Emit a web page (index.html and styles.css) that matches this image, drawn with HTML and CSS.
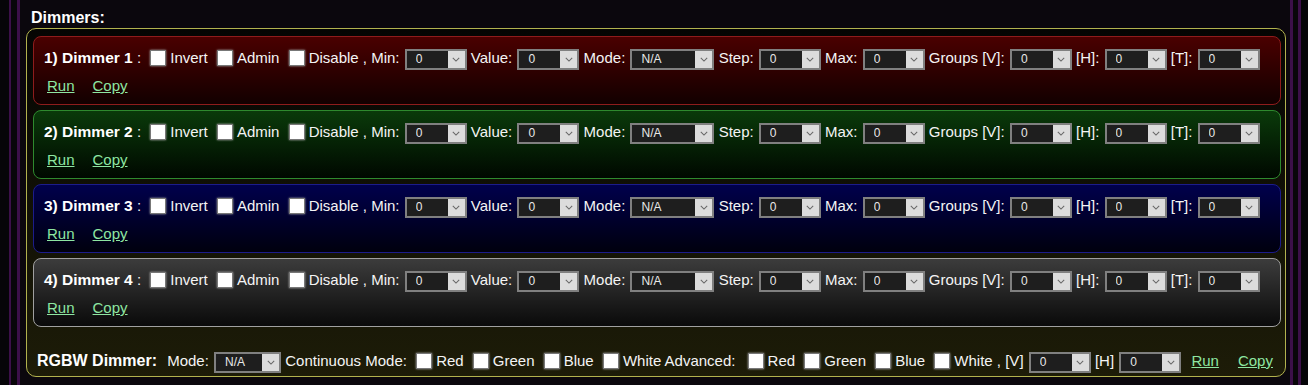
FILE: index.html
```html
<!DOCTYPE html>
<html lang="en">
<head>
  <meta charset="UTF-8">
  <title>Dimmers</title>
  <link rel="stylesheet" href="styles.css">
</head>
<body>

  <div class="outer">
    <div class="inner">

      <div class="title">Dimmers:</div>

      <div class="box">

        <div class="dim red">
          <div class="row">
            <b>1) Dimmer 1</b> : <input type="checkbox">Invert <input type="checkbox">Admin <input type="checkbox">Disable , Min:
            <span class="sel"><select><option>0</option></select><i class="arr"><svg viewBox="0 0 10 6"><path d="M1 1l4 4 4-4"/></svg></i></span> Value:
            <span class="sel"><select><option>0</option></select><i class="arr"><svg viewBox="0 0 10 6"><path d="M1 1l4 4 4-4"/></svg></i></span> Mode:
            <span class="sel wide"><select><option>N/A</option></select><i class="arr"><svg viewBox="0 0 10 6"><path d="M1 1l4 4 4-4"/></svg></i></span> Step:
            <span class="sel"><select><option>0</option></select><i class="arr"><svg viewBox="0 0 10 6"><path d="M1 1l4 4 4-4"/></svg></i></span> Max:
            <span class="sel"><select><option>0</option></select><i class="arr"><svg viewBox="0 0 10 6"><path d="M1 1l4 4 4-4"/></svg></i></span> Groups [V]:
            <span class="sel"><select><option>0</option></select><i class="arr"><svg viewBox="0 0 10 6"><path d="M1 1l4 4 4-4"/></svg></i></span> [H]:
            <span class="sel"><select><option>0</option></select><i class="arr"><svg viewBox="0 0 10 6"><path d="M1 1l4 4 4-4"/></svg></i></span> [T]:
            <span class="sel"><select><option>0</option></select><i class="arr"><svg viewBox="0 0 10 6"><path d="M1 1l4 4 4-4"/></svg></i></span>
          </div>
          <div class="links"><a href="#">Run</a><a href="#">Copy</a></div>
        </div>

        <div class="dim green">
          <div class="row">
            <b>2) Dimmer 2</b> : <input type="checkbox">Invert <input type="checkbox">Admin <input type="checkbox">Disable , Min:
            <span class="sel"><select><option>0</option></select><i class="arr"><svg viewBox="0 0 10 6"><path d="M1 1l4 4 4-4"/></svg></i></span> Value:
            <span class="sel"><select><option>0</option></select><i class="arr"><svg viewBox="0 0 10 6"><path d="M1 1l4 4 4-4"/></svg></i></span> Mode:
            <span class="sel wide"><select><option>N/A</option></select><i class="arr"><svg viewBox="0 0 10 6"><path d="M1 1l4 4 4-4"/></svg></i></span> Step:
            <span class="sel"><select><option>0</option></select><i class="arr"><svg viewBox="0 0 10 6"><path d="M1 1l4 4 4-4"/></svg></i></span> Max:
            <span class="sel"><select><option>0</option></select><i class="arr"><svg viewBox="0 0 10 6"><path d="M1 1l4 4 4-4"/></svg></i></span> Groups [V]:
            <span class="sel"><select><option>0</option></select><i class="arr"><svg viewBox="0 0 10 6"><path d="M1 1l4 4 4-4"/></svg></i></span> [H]:
            <span class="sel"><select><option>0</option></select><i class="arr"><svg viewBox="0 0 10 6"><path d="M1 1l4 4 4-4"/></svg></i></span> [T]:
            <span class="sel"><select><option>0</option></select><i class="arr"><svg viewBox="0 0 10 6"><path d="M1 1l4 4 4-4"/></svg></i></span>
          </div>
          <div class="links"><a href="#">Run</a><a href="#">Copy</a></div>
        </div>

        <div class="dim blue">
          <div class="row">
            <b>3) Dimmer 3</b> : <input type="checkbox">Invert <input type="checkbox">Admin <input type="checkbox">Disable , Min:
            <span class="sel"><select><option>0</option></select><i class="arr"><svg viewBox="0 0 10 6"><path d="M1 1l4 4 4-4"/></svg></i></span> Value:
            <span class="sel"><select><option>0</option></select><i class="arr"><svg viewBox="0 0 10 6"><path d="M1 1l4 4 4-4"/></svg></i></span> Mode:
            <span class="sel wide"><select><option>N/A</option></select><i class="arr"><svg viewBox="0 0 10 6"><path d="M1 1l4 4 4-4"/></svg></i></span> Step:
            <span class="sel"><select><option>0</option></select><i class="arr"><svg viewBox="0 0 10 6"><path d="M1 1l4 4 4-4"/></svg></i></span> Max:
            <span class="sel"><select><option>0</option></select><i class="arr"><svg viewBox="0 0 10 6"><path d="M1 1l4 4 4-4"/></svg></i></span> Groups [V]:
            <span class="sel"><select><option>0</option></select><i class="arr"><svg viewBox="0 0 10 6"><path d="M1 1l4 4 4-4"/></svg></i></span> [H]:
            <span class="sel"><select><option>0</option></select><i class="arr"><svg viewBox="0 0 10 6"><path d="M1 1l4 4 4-4"/></svg></i></span> [T]:
            <span class="sel"><select><option>0</option></select><i class="arr"><svg viewBox="0 0 10 6"><path d="M1 1l4 4 4-4"/></svg></i></span>
          </div>
          <div class="links"><a href="#">Run</a><a href="#">Copy</a></div>
        </div>

        <div class="dim gray">
          <div class="row">
            <b>4) Dimmer 4</b> : <input type="checkbox">Invert <input type="checkbox">Admin <input type="checkbox">Disable , Min:
            <span class="sel"><select><option>0</option></select><i class="arr"><svg viewBox="0 0 10 6"><path d="M1 1l4 4 4-4"/></svg></i></span> Value:
            <span class="sel"><select><option>0</option></select><i class="arr"><svg viewBox="0 0 10 6"><path d="M1 1l4 4 4-4"/></svg></i></span> Mode:
            <span class="sel wide"><select><option>N/A</option></select><i class="arr"><svg viewBox="0 0 10 6"><path d="M1 1l4 4 4-4"/></svg></i></span> Step:
            <span class="sel"><select><option>0</option></select><i class="arr"><svg viewBox="0 0 10 6"><path d="M1 1l4 4 4-4"/></svg></i></span> Max:
            <span class="sel"><select><option>0</option></select><i class="arr"><svg viewBox="0 0 10 6"><path d="M1 1l4 4 4-4"/></svg></i></span> Groups [V]:
            <span class="sel"><select><option>0</option></select><i class="arr"><svg viewBox="0 0 10 6"><path d="M1 1l4 4 4-4"/></svg></i></span> [H]:
            <span class="sel"><select><option>0</option></select><i class="arr"><svg viewBox="0 0 10 6"><path d="M1 1l4 4 4-4"/></svg></i></span> [T]:
            <span class="sel"><select><option>0</option></select><i class="arr"><svg viewBox="0 0 10 6"><path d="M1 1l4 4 4-4"/></svg></i></span>
          </div>
          <div class="links"><a href="#">Run</a><a href="#">Copy</a></div>
        </div>

        <div class="rgbw">
          <b>RGBW Dimmer:</b> Mode:
          <span class="sel mid"><select><option>N/A</option></select><i class="arr"><svg viewBox="0 0 10 6"><path d="M1 1l4 4 4-4"/></svg></i></span> Continuous Mode:
          <input type="checkbox">Red <input type="checkbox">Green <input type="checkbox">Blue <input type="checkbox">White Advanced:
          <span class="adv"><input type="checkbox">Red <input type="checkbox">Green <input type="checkbox">Blue <input type="checkbox">White , [V]</span>
          <span class="sel"><select><option>0</option></select><i class="arr"><svg viewBox="0 0 10 6"><path d="M1 1l4 4 4-4"/></svg></i></span> [H]
          <span class="sel"><select><option>0</option></select><i class="arr"><svg viewBox="0 0 10 6"><path d="M1 1l4 4 4-4"/></svg></i></span>
          <a href="#">Run</a><a href="#">Copy</a>
        </div>

      </div>

    </div>
  </div>

</body>
</html>
```

FILE: styles.css
```css
body {
  margin: 0;
  background: #060508;
  font-family: "Liberation Sans", Arial, sans-serif;
  font-size: 15px;
  color: #f4f4f4;
}

.outer {
  margin: 0 7px 0 9px;
  border-left: 2px solid #3c1049;
  border-right: 3px solid #3c1049;
  padding: 0 5px 0 6px;
  height: 385px;
  background: #080609;
}

.inner {
  border-left: 3px solid #3c1049;
  border-right: 3px solid #3c1049;
  padding: 0 4px 0 6px;
  height: 385px;
  background: #0b070d;
}

.title {
  font-weight: bold;
  font-size: 16px;
  color: #fff;
  padding: 9px 0 0 5px;
  height: 19px;
}

.box {
  border: 1px solid #b2b24e;
  border-radius: 10px;
  padding: 7px 4px 0 6px;
  height: 340px;
  background: linear-gradient(#050503, #1d1c08);
}

.dim {
  border: 1px solid;
  border-radius: 8px;
  padding: 10px 10px 9px 10px;
  margin-bottom: 5px;
  height: 48px;
}

.red {
  border-color: #8e1c1c;
  background: linear-gradient(#4a0000, #120000);
}

.green {
  border-color: #2e8a2e;
  background: linear-gradient(#0a3a0a, #000800);
}

.blue {
  border-color: #1c1c8a;
  background: linear-gradient(#00004c, #00000e);
}

.gray {
  border-color: #a0a0a0;
  background: linear-gradient(#3c3c3c, #0a0a0a);
}

.row {
  height: 22px;
  line-height: 22px;
  white-space: nowrap;
}

.row b {
  font-size: 15.5px;
  color: #fff;
}

input[type=checkbox] {
  appearance: none;
  width: 16px;
  height: 16px;
  margin: 0 4px 0 5px;
  background: #fff;
  border: 1px solid #777;
  box-shadow: 0 0 2px #aaa;
  vertical-align: -3px;
}

.sel {
  display: inline-flex;
  width: 62px;
  height: 21px;
  box-sizing: border-box;
  border: 2px solid #808080;
  background: #1e1e1e;
  vertical-align: middle;
  margin: 0 0 0 1px;
}

.sel.wide {
  width: 84px;
}

.sel.mid {
  width: 67px;
}

.sel select {
  appearance: none;
  flex: 1;
  min-width: 0;
  border: 0;
  background: transparent;
  color: #e8e8e8;
  font-family: "Liberation Sans", Arial, sans-serif;
  font-size: 12px;
  padding: 0 0 0 9px;
  outline: none;
}

.arr {
  width: 17px;
  background: #dcdcdc;
  display: flex;
  align-items: center;
  justify-content: center;
}

.arr svg {
  width: 8px;
  height: 5px;
  fill: none;
  stroke: #666;
  stroke-width: 1.3;
}

.links {
  margin-top: 8px;
  line-height: 18px;
  padding-left: 3px;
}

a {
  color: #8ee6a2;
  margin-right: 18px;
}

.rgbw {
  margin-top: 23px;
  padding-left: 4px;
  line-height: 22px;
  white-space: nowrap;
}

.rgbw b {
  font-size: 16px;
  color: #fff;
  margin-right: 6px;
}

.adv {
  margin-left: 3px;
}

.rgbw a {
  margin: 0 0 0 6px;
}

.rgbw a + a {
  margin-left: 19px;
}
```
